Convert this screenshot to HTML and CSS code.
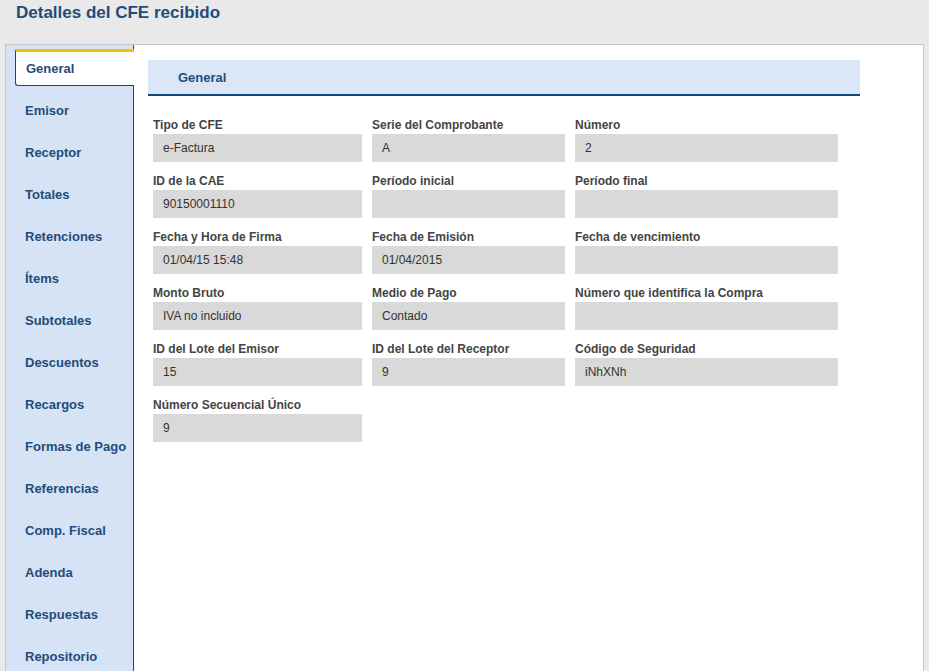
FILE: index.html
```html
<!DOCTYPE html>
<html lang="es">
<head>
<meta charset="utf-8">
<title>Detalles del CFE recibido</title>
<link rel="stylesheet" href="styles.css">
</head>
<body>
<h1 class="page-title">Detalles del CFE recibido</h1>
<div class="panel">
  <nav class="tabs">
    <div class="tab active">General</div>
    <div class="tab">Emisor</div>
    <div class="tab">Receptor</div>
    <div class="tab">Totales</div>
    <div class="tab">Retenciones</div>
    <div class="tab">Ítems</div>
    <div class="tab">Subtotales</div>
    <div class="tab">Descuentos</div>
    <div class="tab">Recargos</div>
    <div class="tab">Formas de Pago</div>
    <div class="tab">Referencias</div>
    <div class="tab">Comp. Fiscal</div>
    <div class="tab">Adenda</div>
    <div class="tab">Respuestas</div>
    <div class="tab">Repositorio</div>
  </nav>
  <main class="content">
    <div class="section-head">General</div>
    <div class="fields">
      <div class="field"><div class="label">Tipo de CFE</div><div class="value">e-Factura</div></div>
      <div class="field"><div class="label">Serie del Comprobante</div><div class="value">A</div></div>
      <div class="field"><div class="label">Número</div><div class="value">2</div></div>

      <div class="field"><div class="label">ID de la CAE</div><div class="value">90150001110</div></div>
      <div class="field"><div class="label">Período inicial</div><div class="value"></div></div>
      <div class="field"><div class="label">Período final</div><div class="value"></div></div>

      <div class="field"><div class="label">Fecha y Hora de Firma</div><div class="value">01/04/15 15:48</div></div>
      <div class="field"><div class="label">Fecha de Emisión</div><div class="value">01/04/2015</div></div>
      <div class="field"><div class="label">Fecha de vencimiento</div><div class="value"></div></div>

      <div class="field"><div class="label">Monto Bruto</div><div class="value">IVA no incluido</div></div>
      <div class="field"><div class="label">Medio de Pago</div><div class="value">Contado</div></div>
      <div class="field"><div class="label">Número que identifica la Compra</div><div class="value"></div></div>

      <div class="field"><div class="label">ID del Lote del Emisor</div><div class="value">15</div></div>
      <div class="field"><div class="label">ID del Lote del Receptor</div><div class="value">9</div></div>
      <div class="field"><div class="label">Código de Seguridad</div><div class="value">iNhXNh</div></div>

      <div class="field"><div class="label">Número Secuencial Único</div><div class="value">9</div></div>
    </div>
  </main>
</div>
</body>
</html>
```

FILE: styles.css
```css
html, body {
  margin: 0;
  padding: 0;
  height: 100%;
  overflow: hidden;
}

body {
  background: #e9e9e9;
  font-family: "Liberation Sans", Arial, sans-serif;
  padding: 0 5px;
}

.page-title {
  margin: 0;
  padding: 3px 0 0 11px;
  height: 44px;
  box-sizing: border-box;
  font-size: 17px;
  line-height: 20px;
  font-weight: bold;
  color: #1f4c7b;
}

.panel {
  display: flex;
  background: #ffffff;
  border: 1px solid #c6c6c6;
  border-bottom: 0;
  height: calc(100vh - 45px);
}

.tabs {
  width: 127px;
  flex: none;
  background: #d6e3f4;
  border-right: 1px solid #0d4a80;
  padding-top: 4px;
}

.tab {
  height: 42px;
  line-height: 42px;
  padding-left: 19px;
  font-size: 13px;
  font-weight: bold;
  color: #1f4c7b;
  white-space: nowrap;
}

.tab.active {
  height: 33px;
  line-height: 34px;
  margin: 0 -1px 4px 9px;
  padding-left: 10px;
  background: #ffffff;
  border-top: 3px solid #f3c400;
  border-left: 1px solid #0d4a80;
  border-bottom: 1px solid #0d4a80;
  border-bottom-left-radius: 3px;
}

.content {
  flex: 1;
  padding: 15px 0 0 14px;
}

.section-head {
  width: 682px;
  height: 34px;
  line-height: 36px;
  padding-left: 30px;
  background: #dbe7f7;
  border-bottom: 2px solid #0d4a80;
  font-size: 13px;
  font-weight: bold;
  color: #1f4c7b;
}

.fields {
  display: grid;
  grid-template-columns: 209px 193px 263px;
  column-gap: 10px;
  margin: 10px 0 0 5px;
}

.label {
  padding-top: 11px;
  margin-bottom: 1px;
  font-size: 12px;
  line-height: 16px;
  font-weight: bold;
  color: #444444;
  white-space: nowrap;
}

.value {
  height: 28px;
  line-height: 28px;
  padding-left: 10px;
  background: #d9d9d9;
  font-size: 12px;
  color: #333333;
}
```
